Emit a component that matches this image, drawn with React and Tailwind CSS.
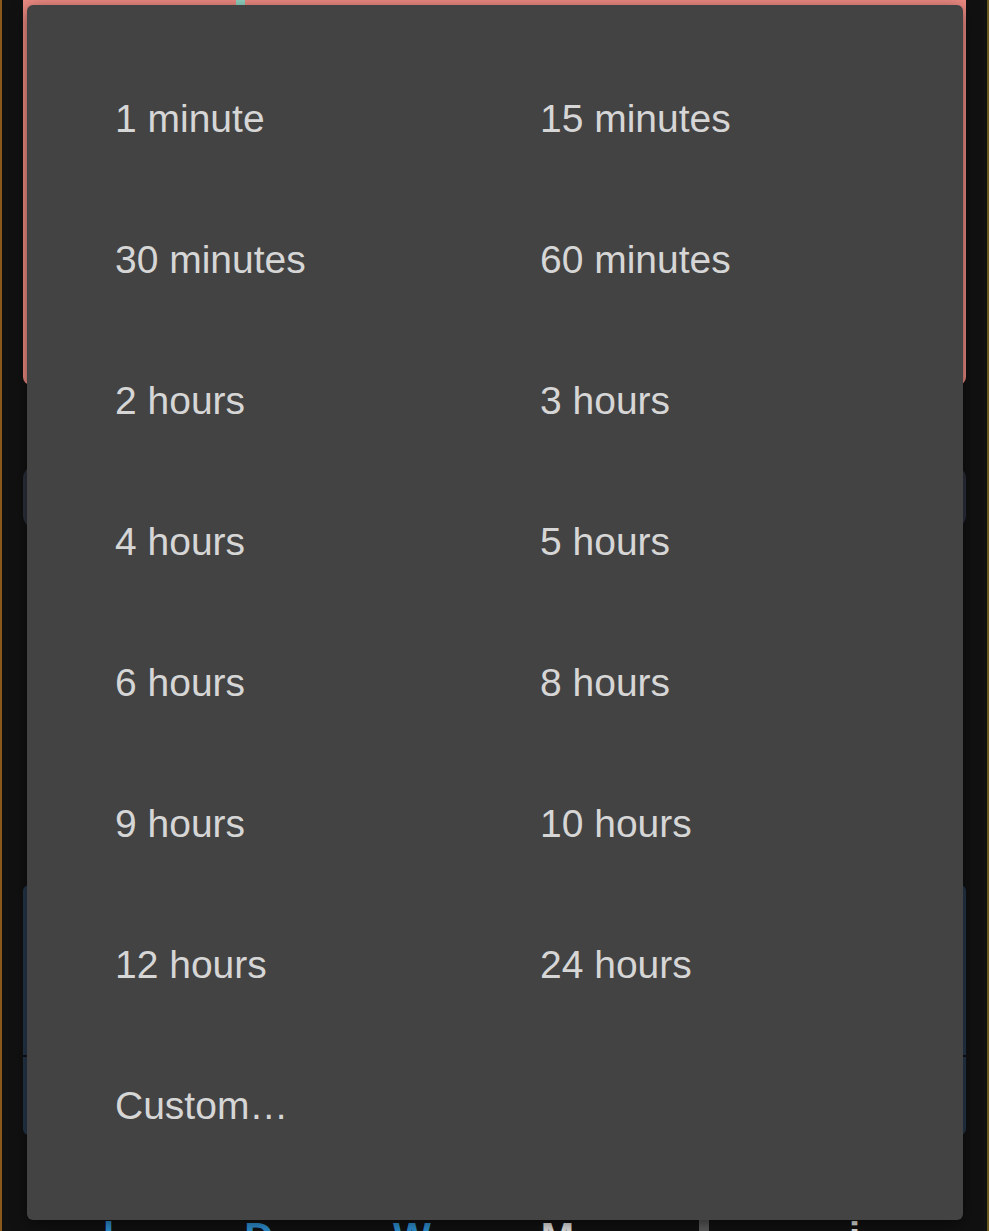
const options = [
  "1 minute",
  "15 minutes",
  "30 minutes",
  "60 minutes",
  "2 hours",
  "3 hours",
  "4 hours",
  "5 hours",
  "6 hours",
  "8 hours",
  "9 hours",
  "10 hours",
  "12 hours",
  "24 hours",
  "Custom…",
];

const Backdrop = () => (
  <div className="flex flex-col pl-[21px] pr-[21px]">
    {/* alarm card, scrolled up past its top */}
    <div className="h-[385px] bg-[#ec8a82] rounded-b-[8px] flex items-start">
      <div className="ml-[213px] w-[9px] h-[5px] bg-[#8fd3c0]" />
      <div className="ml-[24px] -mt-[30px] text-[36px] leading-[36px] text-[#9a5a55]">
        10:15
      </div>
    </div>
    <div className="mt-[80px] h-[64px] rounded-[14px] bg-[#2c303b]" />
    <div className="mt-[356px] h-[170px] rounded-t-[6px] bg-[#26364a]" />
    <div className="mt-[2px] h-[78px] rounded-b-[6px] bg-[#26364a]" />
    <div className="mt-[82px] flex items-start h-[40px] overflow-hidden text-[40px] font-bold leading-none">
      <span className="ml-[80px] text-[#2d8fd0]">l</span>
      <span className="ml-[130px] text-[#2d8fd0]">D</span>
      <span className="ml-[120px] text-[#2d8fd0]">W</span>
      <span className="ml-[110px] text-[#e0e0e0]">M</span>
      <span className="ml-[125px] mt-[-6px] w-[10px] h-[20px] bg-[#5a5a5a]" />
      <span className="ml-[140px] text-[#e0e0e0]">i</span>
    </div>
  </div>
);

const DurationMenu = () => (
  <div className="absolute left-[25px] top-[5px] w-[936px] h-[1215px] rounded-[6px] bg-[#434343] shadow-[0_4px_16px_rgba(0,0,0,0.5)] py-[43.5px]">
    <div className="grid grid-cols-[425px_1fr]">
      {options.map((label) => (
        <div
          key={label}
          className="h-[141px] flex items-center pl-[88px] text-[39px] text-[#d6d6d6] cursor-pointer hover:bg-[#4d4d4d]"
        >
          {label}
        </div>
      ))}
    </div>
  </div>
);

export default function App() {
  return (
    <div
      className="relative w-[989px] h-[1231px] overflow-hidden bg-[#111111] border-l-[2px] border-l-[#8a5a1c] border-r-[2px] border-r-[#6a5a20]"
      style={{ fontFamily: '"Liberation Sans", Arial, sans-serif' }}
    >
      <Backdrop />
      <DurationMenu />
    </div>
  );
}
